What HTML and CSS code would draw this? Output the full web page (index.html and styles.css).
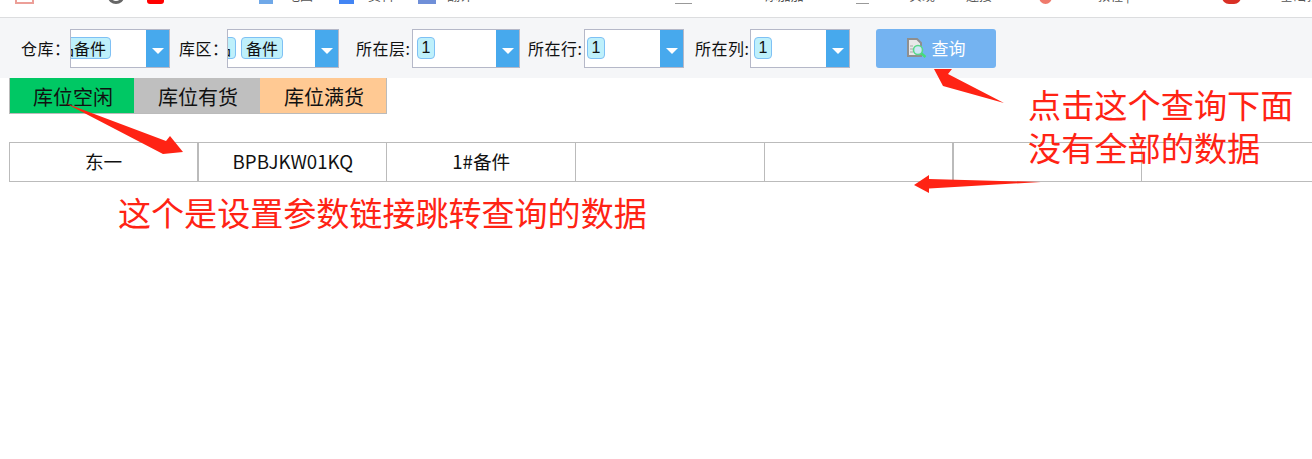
FILE: index.html
```html
<!DOCTYPE html>
<html lang="zh-CN">
<head>
  <meta charset="UTF-8">
  <title>库位查询</title>
  <link rel="stylesheet" href="styles.css">
</head>
<body>

  <div class="bookmarks">
    <span class="mark mark-gmail"><i class="ico ico-mail"></i>Gmail</span>
    <span class="mark mark-globe"><i class="ico ico-ring"></i></span>
    <span class="mark mark-yt"><i class="ico ico-yt"></i>YouTube</span>
    <span class="mark mark-map"><i class="ico ico-map"></i>地图</span>
    <span class="mark mark-doc"><i class="ico ico-folder"></i>资料</span>
    <span class="mark mark-fan"><i class="ico ico-fan"></i>翻译</span>
    <span class="mark mark-home"><i class="ico ico-n">N·</i>Presentation...</span>
    <span class="mark mark-t1"><i class="ico ico-page"></i>alter table添加加...</span>
    <span class="mark mark-t2"><i class="ico ico-page2"></i>Java实现SFTP连接...</span>
    <span class="mark mark-t3"><i class="ico ico-red"></i>Java 教程 | Oracle...</span>
    <span class="mark mark-t4"><i class="ico ico-dark"></i>Java基础教程</span>
  </div>

  <div class="toolbar">
    <label class="lbl lbl-ck">仓库：</label>
    <div class="combo combo-ck">
      <div class="tags"><span class="tag tag-cut1">备品备件</span></div>
      <span class="drop"></span>
    </div>

    <label class="lbl lbl-kq">库区：</label>
    <div class="combo combo-kq">
      <div class="tags"><span class="tag tag-cut2">备品</span><span class="tag">备件</span></div>
      <span class="drop"></span>
    </div>

    <label class="lbl lbl-c">所在层:</label>
    <div class="combo combo-c">
      <div class="tags"><span class="tag tag-num">1</span></div>
      <span class="drop"></span>
    </div>

    <label class="lbl lbl-h">所在行:</label>
    <div class="combo combo-h">
      <div class="tags"><span class="tag tag-num">1</span></div>
      <span class="drop"></span>
    </div>

    <label class="lbl lbl-l">所在列:</label>
    <div class="combo">
      <div class="tags"><span class="tag tag-num">1</span></div>
      <span class="drop"></span>
    </div>

    <button class="query">
      <svg width="22" height="20" viewBox="0 0 22 20">
        <path d="M1 1h9l4 4v13H1z" fill="#e8e8e8" stroke="#8f8f8f" stroke-width="2"/>
        <path d="M3 8h3M3 11h3M3 14h3" stroke="#a9a9a9" stroke-width="1"/>
        <circle cx="11" cy="12" r="4.5" fill="#cfe6f5" stroke="#58d98a" stroke-width="1.6"/>
        <path d="M14.5 15.5l4 3.5" stroke="#45de78" stroke-width="2.4"/>
      </svg>
      <span class="query-text">查询</span>
    </button>
  </div>

  <div class="legend">
    <div class="legend-item free">库位空闲</div>
    <div class="legend-item used">库位有货</div>
    <div class="legend-item full">库位满货</div>
  </div>

  <table class="grid">
    <tr>
      <td>东一</td>
      <td class="thick">BPBJKW01KQ</td>
      <td>1#备件</td>
      <td></td>
      <td></td>
      <td class="thick"></td>
      <td></td>
    </tr>
  </table>

  <!-- annotations drawn over the screenshot -->
  <svg class="arrows" width="1312" height="459" viewBox="0 0 1312 459">
    <path d="M934 69L952 69L948 74L1004 103L943 86Z"/>
    <path d="M65 103L166 141L170 136L183 152L163 154Z"/>
    <path d="M1041 182L929 179L929 175L914 185L929 193L929 188.5Z"/>
  </svg>
  <div class="note note-query">点击这个查询下面<br>没有全部的数据</div>
  <div class="note note-link">这个是设置参数链接跳转查询的数据</div>

</body>
</html>
```

FILE: styles.css
```css
html, body {
  margin: 0;
  padding: 0;
  height: 459px;
  overflow: hidden;
  background-color: #fff;
  font-family: "Noto Sans CJK SC", "Liberation Sans", sans-serif;
  color: #111;
}

/* browser bookmark bar, only the bottom of it is in the picture */
.bookmarks {
  display: flex;
  align-items: flex-end;
  height: 3px;
  padding: 0 0 14px 15px;
  border-bottom: 1px solid #dcdddf;
  overflow: hidden;
  font-size: 13px;
  line-height: 16px;
  color: #555;
  white-space: nowrap;
}

.mark {
  display: flex;
  align-items: flex-end;
  flex: none;
}

.ico {
  display: block;
  flex: none;
  height: 14px;
  margin-bottom: -1px;
  font-style: normal;
}

.mark-gmail { width: 93px; }
.mark-globe { width: 39px; }
.mark-yt { width: 112px; }
.mark-map { width: 80px; }
.mark-doc { width: 79px; }
.mark-fan { width: 112px; }
.mark-home { width: 145px; }
.mark-t1 { width: 181px; }
.mark-t2 { width: 183px; }
.mark-t3 { width: 183px; }

.ico-mail { width: 19px; margin-right: 12px; background-color: #fff; border: 2px solid #ec9f98; border-top: 0; box-sizing: border-box; }
.ico-ring { width: 16px; border: 3px solid #666; border-radius: 50%; box-sizing: border-box; }
.ico-yt { width: 17px; margin-right: 15px; background-color: #f00; border-radius: 3px; }
.ico-map { width: 14px; margin-right: 14px; background-color: #6fa8e8; }
.ico-folder { width: 15px; margin-right: 14px; background-color: #4285f4; }
.ico-fan { width: 18px; margin-right: 11px; background-color: #6f8fd8; }
.ico-n { width: 30px; height: 16px; margin-bottom: 0; }
.ico-page { width: 17px; margin-right: 11px; border-bottom: 1px solid #999; box-sizing: border-box; }
.ico-page2 { width: 13px; margin-right: 12px; border-bottom: 1px solid #999; box-sizing: border-box; }
.ico-red { width: 13px; margin-right: 14px; background-color: #ef7a6c; border-radius: 50%; }
.ico-dark { width: 19px; margin-right: 11px; background-color: #d93025; border-radius: 0 0 7px 7px; }

.toolbar {
  display: flex;
  align-items: center;
  height: 60px;
  padding-left: 21px;
  background-color: #f5f6f8;
  font-size: 16px;
}

.lbl {
  flex: none;
  white-space: nowrap;
  letter-spacing: 0.5px;
}

.lbl-ck { width: 49px; }
.lbl-kq { width: 48px; margin-left: 9px; }
.lbl-c { width: 56px; margin-left: 17px; }
.lbl-h { width: 56px; margin-left: 8px; }
.lbl-l { width: 55px; margin-left: 11px; }

.combo {
  display: flex;
  flex: none;
  width: 100px;
  height: 39px;
  box-sizing: border-box;
  border: 1px solid #b5b8c8;
  background-color: #fff;
}

.combo-kq { width: 112px; }
.combo-c { width: 108px; }

.tags {
  display: flex;
  align-items: center;
  flex: 1;
  min-width: 0;
  padding-left: 3px;
  overflow: hidden;
}

.combo-c .tags { padding-left: 4px; }
.combo-h .tags { padding-left: 2px; }

.tag {
  flex: none;
  height: 22px;
  box-sizing: border-box;
  padding: 0 4px;
  margin-right: 5px;
  border: 1px solid #7fc0f4;
  border-radius: 4px;
  background-color: #bef0fb;
  font-size: 16px;
  line-height: 20px;
}

.tag-num {
  padding: 0 3.5px;
  font-family: "Liberation Sans", sans-serif;
}

.tag-cut1 { margin-left: -37px; }
.tag-cut2 { margin-left: -37px; }

.drop {
  position: relative;
  flex: none;
  width: 23px;
  background-color: #47a9ed;
}

.drop::after {
  content: "";
  position: absolute;
  left: 6px;
  top: 18px;
  border-left: 6px solid transparent;
  border-right: 6px solid transparent;
  border-top: 6px solid #fff;
}

.query {
  display: flex;
  align-items: center;
  justify-content: center;
  gap: 3px;
  flex: none;
  width: 120px;
  height: 39px;
  margin-left: 26px;
  padding: 0;
  border: none;
  border-radius: 3px;
  background-color: #74b3f1;
  color: #fff;
  font-family: inherit;
  font-size: 17px;
}

.query-text {
  margin-top: -2px;
}

.legend {
  display: flex;
  width: 378px;
  height: 36px;
  box-sizing: border-box;
  margin-left: 9px;
  border: 1px solid #bbb;
  border-top: 0;
}

.legend-item {
  flex: 1;
  font-size: 20px;
  line-height: 37px;
  text-align: center;
  text-indent: 2px;
}

.legend-item.free {
  flex: none;
  width: 124px;
}

.free { background-color: #00c864; }
.used { background-color: #bfbfbf; }
.full { background-color: #ffc993; }

.grid {
  width: 1322px;
  height: 40px;
  margin: 28px 0 0 9px;
  table-layout: fixed;
  border-collapse: collapse;
  font-size: 18.67px;
}

.grid td {
  padding: 0 0 3px;
  border: 1px solid #bbb;
  text-align: center;
}

.grid td.thick {
  border-left-width: 2px;
}

.arrows {
  position: absolute;
  left: 0;
  top: 0;
  fill: #ff2314;
}

.note {
  position: absolute;
  color: #ff2314;
  font-size: 33.2px;
  line-height: 43px;
  white-space: nowrap;
}

.note-query { left: 1028px; top: 82px; }
.note-link { left: 118px; top: 191px; font-size: 33.05px; }
```
